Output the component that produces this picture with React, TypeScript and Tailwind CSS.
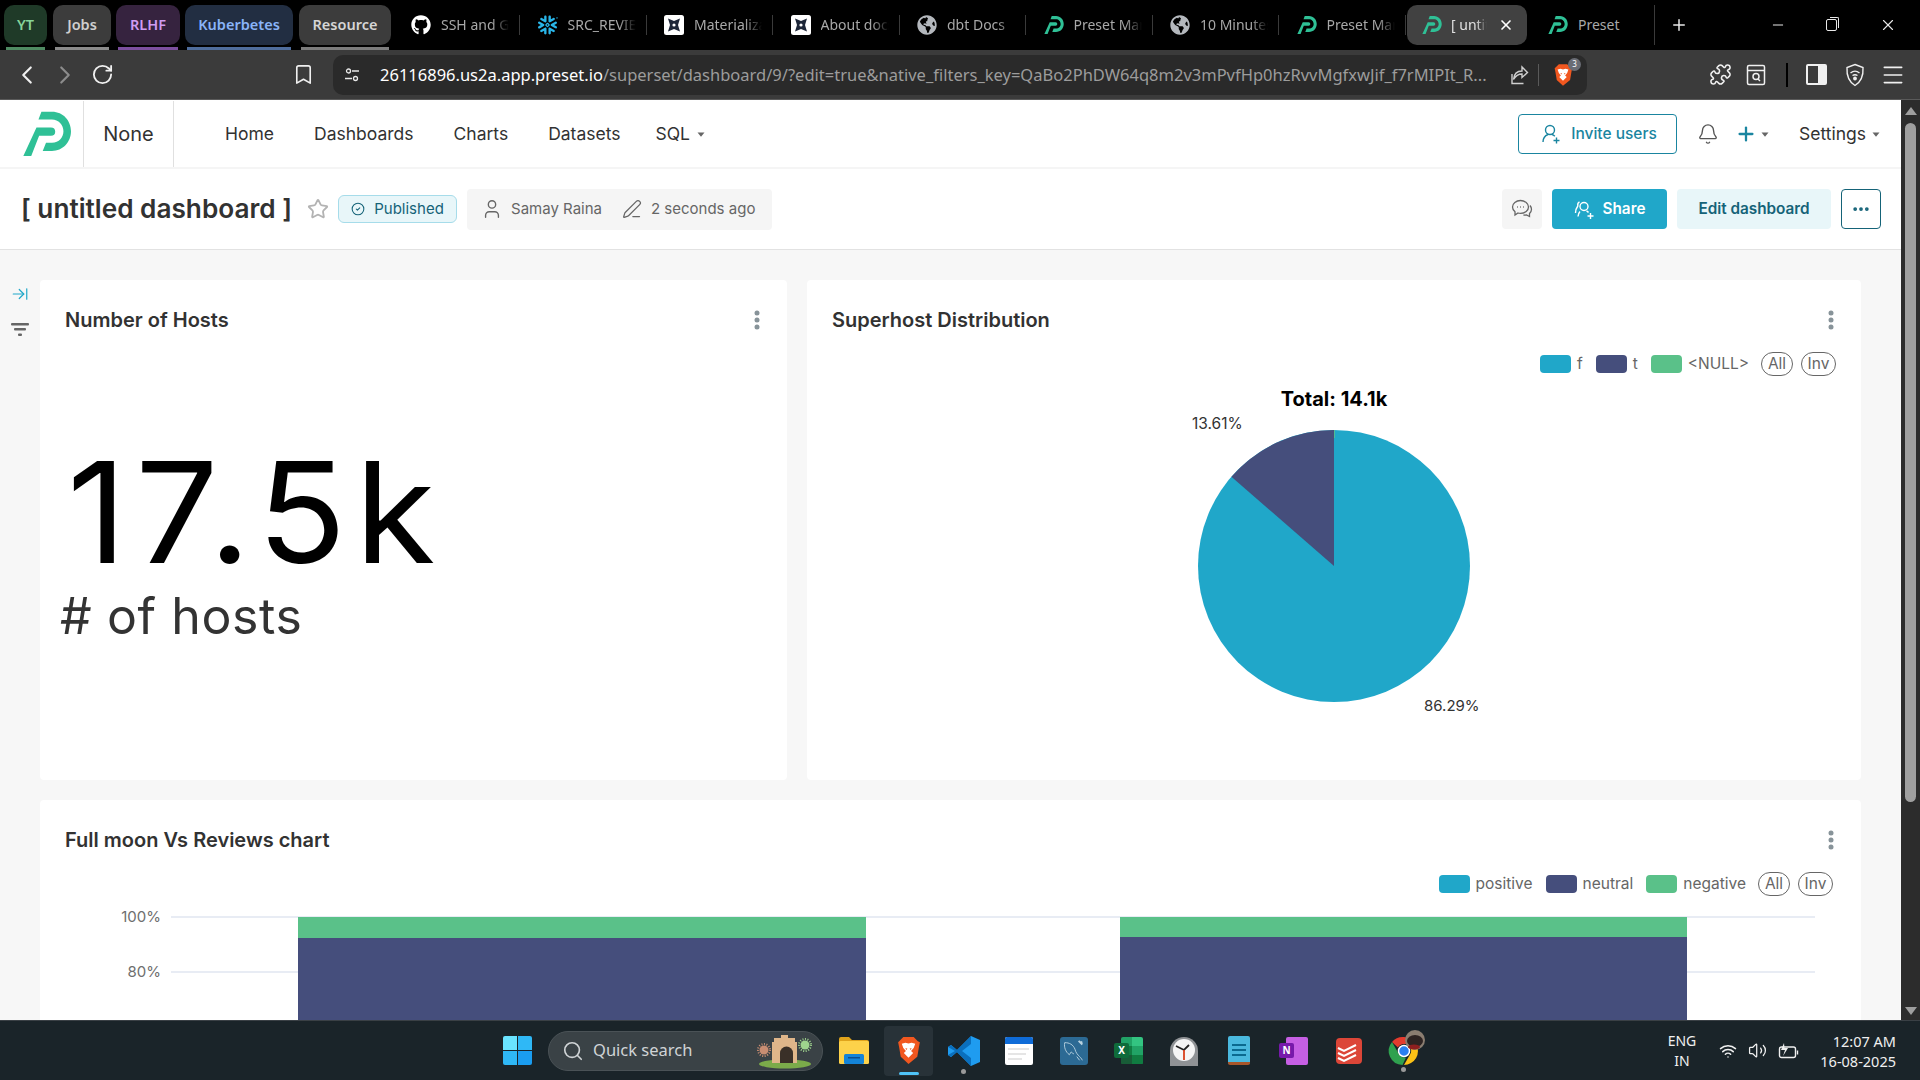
import {
  ArrowRightToLine,
  Bell,
  Bookmark,
  ChevronLeft,
  ChevronRight,
  CircleCheck,
  Ellipsis,
  Menu,
  Minus,
  PenLine,
  Plus,
  Puzzle,
  RotateCw,
  Search,
  Star,
  User,
  Volume2,
  Wifi,
  X,
} from "lucide-react";
import { FaGithub, FaGlobeAmericas } from "react-icons/fa";
import { SiSnowflake } from "react-icons/si";
import type { ReactNode } from "react";

const PresetLogo = ({ className }: { className: string }) => (
  <svg viewBox="35 15 150 140" className={className} fill="#2fc096">
    <path d="M78 65H122Q135 65 135 78Q135 90 122 90H86L62 152H38Z" />
    <path d="M93 17H125C160 17 183 45 183 77C183 110 158 137 125 137H97L107 112H125C147 112 160 95 160 77C160 57 145 41 125 41H84Z" />
  </svg>
);

const MaterializeIcon = () => (
  <svg viewBox="0 0 20 20" className="h-5 w-5">
    <rect width="20" height="20" rx="2.5" fill="#fff" />
    <path
      d="M4 3.5 10 6l6-2.5L14 10l2 6.500L10 14l-6 2.500L6 10Z"
      fill="#1d2638"
    />
    <circle cx="10" cy="10" r="1.600" fill="#fff" />
  </svg>
);

const Kebab = () => (
  <svg viewBox="0 0 6 20" className="h-5 w-1.5" fill="#879399">
    <circle cx="3" cy="3" r="2.500" />
    <circle cx="3" cy="10" r="2.500" />
    <circle cx="3" cy="17" r="2.500" />
  </svg>
);

const Caret = () => (
  <svg viewBox="0 0 8 5" className="h-[5px] w-2" fill="#666">
    <path d="M0.500 0.500h7L4 4.800z" />
  </svg>
);

const groups = [
  { label: "YT", w: "w-[43px]", ml: "ml-[4px]", box: "bg-[#1f3a28] text-[#86d49a]", line: "bg-[#4f8a62]" },
  { label: "Jobs", w: "w-[58px]", ml: "ml-[6px]", box: "bg-[#3c3c3c] text-[#cfcfcf]", line: "bg-[#8a8a8a]" },
  { label: "RLHF", w: "w-[64px]", ml: "ml-[5px]", box: "bg-[#36233f] text-[#d09cf2]", line: "bg-[#7c4f9e]" },
  { label: "Kuberbetes", w: "w-[108px]", ml: "ml-[5px]", box: "bg-[#222e42] text-[#8ab4f8]", line: "bg-[#4f6d9c]" },
  { label: "Resource", w: "w-[92px]", ml: "ml-[6px]", box: "bg-[#3c3c3c] text-[#d6d6d6]", line: "bg-[#7c7c7c]" },
];

const tabs: { label: string; icon: ReactNode }[] = [
  { label: "SSH and GPG keys", icon: <FaGithub className="h-5 w-5 text-white" /> },
  { label: "SRC_REVIEWS", icon: <SiSnowflake className="h-5 w-5 text-[#29b5e8]" /> },
  { label: "Materialization", icon: <MaterializeIcon /> },
  { label: "About docs", icon: <MaterializeIcon /> },
  { label: "dbt Docs", icon: <FaGlobeAmericas className="h-5 w-5 text-[#b4b8bd]" /> },
  { label: "Preset Manager", icon: <PresetLogo className="h-5 w-5" /> },
  { label: "10 Minutes to", icon: <FaGlobeAmericas className="h-5 w-5 text-[#b4b8bd]" /> },
  { label: "Preset Manager", icon: <PresetLogo className="h-5 w-5" /> },
];

const TabStrip = () => (
  <div className="flex h-[50px] bg-black pt-[5px] text-[14px] [font-family:'Noto_Sans',sans-serif]">
    {groups.map((g) => (
      <div key={g.label} className={`${g.ml} ${g.w} flex flex-col`}>
        <div
          className={`flex h-10 items-center justify-center rounded-[10px] text-[14.500px] font-semibold ${g.box}`}
        >
          {g.label}
        </div>
        <div className={`mx-[2px] mt-[2px] h-[3px] ${g.line}`} />
      </div>
    ))}
    <div className="ml-[3px] flex h-10">
      {tabs.map((t, i) => (
        <div key={i} className="flex w-[126.500px] items-center">
          <div className="ml-[17px] flex w-[109px] items-center gap-[10px] border-r border-[#3a3a3a]">
            {t.icon}
            <span className="-mt-[1px] w-[68px] overflow-hidden whitespace-nowrap text-[#a8a8a8] [mask-image:linear-gradient(to_right,black_75%,transparent)]">
              {t.label}
            </span>
          </div>
        </div>
      ))}
    </div>
    <div className="ml-[1px] flex h-10 w-[120px] items-center rounded-[10px] bg-[#414141] pl-[15px]">
      <PresetLogo className="h-5 w-5" />
      <span className="-mt-[1px] ml-[9px] w-[36px] overflow-hidden whitespace-nowrap text-[#e0e0e0] [mask-image:linear-gradient(to_right,black_70%,transparent)]">
        [ untitled
      </span>
      <X size={16} strokeWidth={2.500} className="ml-[11px] text-white" />
    </div>
    <div className="flex h-10 w-[128px] items-center border-r border-[#3a3a3a] pl-[21px]">
      <PresetLogo className="h-5 w-5" />
      <span className="-mt-[1px] ml-[10px] text-[#a8a8a8]">Preset</span>
    </div>
    <div className="ml-[15px] flex h-10 items-center">
      <Plus size={18} strokeWidth={2} className="text-[#e8e8e8]" />
    </div>
    <div className="ml-[82px] flex h-10 items-center">
      <Minus size={16} strokeWidth={1.500} className="text-[#e8e8e8]" />
    </div>
    <div className="ml-[40px] flex h-10 items-center">
      <div className="relative h-[12px] w-[11px] rounded-[2px] border border-[#e8e8e8]">
        <div className="absolute -top-[3px] -right-[3px] h-[11px] w-[9px] rounded-tr-[2px] border-t border-r border-[#e8e8e8]" />
      </div>
    </div>
    <div className="ml-[42px] flex h-10 items-center">
      <X size={18} strokeWidth={1.500} className="text-[#e8e8e8]" />
    </div>
  </div>
);

const BraveIcon = ({ size }: { size: string }) => (
  <svg viewBox="0 0 24 28" className={size}>
    <path
      d="M3 5 7 1h10l4 4 2 1-1 5-1.500 9L12 27 4.500 20 3 11 2 6Z"
      fill="#f1571f"
    />
    <path
      d="M5.500 7.500 9 6.500l3 .8 3-.8 3.500 1-1.500 4-2.500 3 2 2L12 21l-4.500-4.500 2-2-2.500-3Z"
      fill="#fff"
    />
    <path d="M9 11.500l2 .8-1.200 1.200zM15 11.500l-2 .8 1.200 1.200z" fill="#f1571f" />
  </svg>
);

const ToolBar = () => (
  <div className="flex h-[50px] items-center border-b border-[#5a5a5a] bg-[#3b3b3b] text-[#f0f0f0] [font-family:'Noto_Sans',sans-serif]">
    <ChevronLeft size={30} strokeWidth={1.700} className="ml-[12px]" />
    <ChevronRight size={30} strokeWidth={1.700} className="ml-[8px] text-[#8c8c8c]" />
    <RotateCw size={23} strokeWidth={1.900} className="ml-[11px]" />
    <Bookmark size={23} strokeWidth={1.700} className="ml-[178px]" />
    <div className="ml-[18px] flex h-10 w-[1254px] items-center rounded-[10px] bg-[#2a2a2a] pl-[11px]">
      <svg viewBox="0 0 16 16" className="h-4 w-4" fill="none" stroke="#e8e8e8" strokeWidth="1.300">
        <circle cx="4.500" cy="4" r="2" />
        <path d="M8 4h7M1 11.500h7" />
        <circle cx="11.500" cy="11.500" r="2" />
      </svg>
      <span className="ml-[20px] w-[1108px] overflow-hidden pt-[1px] whitespace-nowrap text-[16.500px] text-[#9c9c9c]">
        <span className="text-white">26116896.us2a.app.preset.io</span>
        /superset/dashboard/9/?edit=true&amp;native_filters_key=QaBo2PhDW64q8m2v3mPvfHp0hzRvvMgfxwJif_f7rMIPIt_R...
      </span>
      <svg viewBox="0 0 22 22" className="ml-[19px] h-[22px] w-[22px]" fill="none" stroke="#cfcfcf" strokeWidth="1.400">
        <path d="M5 10v9.500h11.500M6.500 15.500C7 10 10.500 7 15 7V3l5.500 5.500L15 13.500V10C11 10 8.500 12 6.500 15.500Z" />
      </svg>
      <div className="ml-[9px] h-[22px] w-px bg-[#5a5a5a]" />
      <div className="relative ml-[14px]">
        <BraveIcon size="h-[24px] w-[20px]" />
        <span className="absolute -top-[5px] -right-[8px] flex h-[13px] w-[13px] items-center justify-center rounded-full bg-[#6a6d75] text-[8px] text-white">
          3
        </span>
      </div>
    </div>
    <Puzzle size={23} strokeWidth={1.600} className="ml-[122px]" />
    <svg viewBox="0 0 20 22" className="ml-[14px] h-[22px] w-5" fill="none" stroke="#f0f0f0" strokeWidth="1.500">
      <rect x="1.500" y="1.500" width="17" height="19" rx="1.500" />
      <path d="M1.500 6.500h17" />
      <circle cx="10" cy="12.500" r="3" />
      <path d="m12 15 2 2" />
    </svg>
    <div className="ml-[20px] h-[24px] w-[2px] bg-black" />
    <div className="ml-[18px] flex h-[21px] w-[21px] justify-end rounded-[2px] border-2 border-[#f0f0f0]">
      <div className="w-[7px] bg-[#f0f0f0]" />
    </div>
    <svg viewBox="0 0 20 24" className="ml-[18px] h-6 w-5" fill="none" stroke="#f0f0f0" strokeWidth="1.400">
      <path d="M10 1.500 18 4.500c.5 8-1.500 14-8 18-6.500-4-8.500-10-8-18Z" />
      <path d="M5.500 10c3-2.500 6-2.500 9 0M7.500 12.500c1.500-1 3.500-1 5 0" />
      <circle cx="10" cy="15.500" r="1.200" fill="#f0f0f0" />
    </svg>
    <Menu size={26} strokeWidth={1.500} className="ml-[15px]" />
  </div>
);

const InviteIcon = () => (
  <svg viewBox="0 0 18 20" className="h-5 w-[18px]" fill="none" stroke="currentColor" strokeWidth="1.400">
    <circle cx="8" cy="6" r="4.500" />
    <path d="M1 18c0-4 2.500-6.500 5-7.500M10 10.500c1 .3 2 .9 2.800 1.700" />
    <path d="M11.500 16.500h6M14.500 13.500v6" />
  </svg>
);

const ShareIcon = () => (
  <svg viewBox="0 0 20 20" className="h-5 w-5" fill="none" stroke="currentColor" strokeWidth="1.400">
    <circle cx="10" cy="7.500" r="4" />
    <path d="M5.500 3C4 3.500 3.500 5 3.800 7c-1.500 2-2.300 4.500-2.300 7M6 12.500c-1 1-1.800 3-2 5M12.500 12c.8.300 1.500.8 2 1.500" />
    <path d="M13.500 17h6M16.500 14v6" />
  </svg>
);

const NavBar = () => (
  <div className="flex h-[67px] items-center bg-white pt-[1px] text-[17.500px] text-[#323232]">
    <div className="flex h-full w-[84px] items-center justify-center border-r border-[#e0e0e0] pl-[10px]">
      <PresetLogo className="h-[46px] w-[50px]" />
    </div>
    <div className="flex h-full w-[90px] items-center justify-center border-r border-[#e0e0e0] text-[20px]">
      None
    </div>
    <div className="ml-[51px] flex items-center gap-[40px]">
      <span>Home</span>
      <span>Dashboards</span>
      <span>Charts</span>
      <span>Datasets</span>
      <span className="-ml-[5px] flex items-center gap-[7px]">
        SQL <Caret />
      </span>
    </div>
    <div className="ml-auto flex items-center pr-[21px]">
      <button className="flex h-10 w-[159px] items-center justify-center gap-[11px] rounded-[4px] border border-[#1a85a0] pl-[4px] text-[15.500px] font-medium text-[#1a85a0]">
        <InviteIcon />
        Invite users
      </button>
      <Bell size={22} strokeWidth={1.500} className="ml-[20px] text-[#555]" />
      <Plus size={22} strokeWidth={2.500} className="ml-[16px] text-[#1a85a0]" />
      <span className="ml-[4px]">
        <Caret />
      </span>
      <span className="ml-[30px] flex items-center gap-[6px]">
        Settings <Caret />
      </span>
    </div>
  </div>
);

const DashHeader = () => (
  <div className="flex h-[83px] items-center border-t-2 border-b border-t-[#f5f5f5] border-b-[#e2e2e2] bg-white pl-[21px]">
    <span className="text-[26.200px] leading-none font-semibold whitespace-nowrap text-[#323232]">
      [ untitled dashboard ]
    </span>
    <Star size={22} strokeWidth={2} className="ml-[15px] text-[#b3b3b3]" />
    <span className="ml-[9px] flex h-[28px] w-[119px] items-center justify-center gap-[9px] rounded-[6px] border border-[#a6dcea] bg-[#e8f6f9] text-[15px] text-[#156378]">
      <CircleCheck size={14} strokeWidth={1.800} />
      Published
    </span>
    <div className="ml-[10px] flex h-[41px] w-[305px] items-center rounded-[4px] bg-[#f5f5f5] pl-[14px] text-[15px] text-[#666]">
      <User size={22} strokeWidth={1.500} />
      <span className="ml-[8px]">Samay Raina</span>
      <PenLine size={20} strokeWidth={1.500} className="ml-[20px]" />
      <span className="ml-[9px]">2 seconds ago</span>
    </div>
    <div className="ml-auto flex items-center gap-[10px] pr-[20px]">
      <div className="flex h-10 w-10 items-center justify-center rounded-[4px] bg-[#f5f5f5]">
        <svg viewBox="0 0 22 20" className="h-5 w-[22px]" fill="none" stroke="#666" strokeWidth="1.300">
          <path d="M9.500 1.500C5 1.500 1.500 4.500 1.500 8c0 2 1 3.500 2.500 4.700V16l3-2c1 .3 1.500.4 2.500.4 4.500 0 8-2.900 8-6.400s-3.500-6.500-8-6.500Z" />
          <path d="M19 6.500c1 1.200 1.500 2.500 1.500 3.800 0 1.800-.8 3-2 4.200v3l-3-1.500c-1 .2-2 .2-3 0" />
          <path d="M6 8h.8M9 8h.8M12 8h.8" />
        </svg>
      </div>
      <button className="flex h-10 w-[115px] items-center justify-center gap-[9px] rounded-[4px] bg-[#20a7c9] text-[15.300px] font-semibold text-white">
        <ShareIcon />
        Share
      </button>
      <button className="flex h-10 w-[154px] items-center justify-center rounded-[4px] bg-[#e8f6f9] text-[15.300px] font-semibold text-[#156378]">
        Edit dashboard
      </button>
      <button className="flex h-10 w-10 items-center justify-center rounded-[4px] border border-[#156378] text-[#156378]">
        <Ellipsis size={20} strokeWidth={2.500} />
      </button>
    </div>
  </div>
);

const Swatch = ({ color }: { color: string }) => (
  <span className={`inline-block h-[18px] w-[31px] rounded-[4px] ${color}`} />
);

const Legend = ({ items }: { items: { color: string; label: string }[] }) => (
  <div className="flex h-6 items-center justify-end text-[15.500px] text-[#666]">
    {items.map((item) => (
      <span key={item.label} className="mr-[13px] flex items-center gap-[6px]">
        <Swatch color={item.color} />
        {item.label}
      </span>
    ))}
    <span className="-ml-[1px] flex h-6 w-[32px] items-center justify-center rounded-full border border-[#666]">
      All
    </span>
    <span className="ml-[8px] flex h-6 w-[35px] items-center justify-center rounded-full border border-[#666]">
      Inv
    </span>
  </div>
);

const CardTitle = ({ title }: { title: string }) => (
  <div className="flex h-7 items-center justify-between text-[20px] font-semibold text-[#323232]">
    {title}
    <Kebab />
  </div>
);

const NumberCard = () => (
  <div className="h-[500px] w-[747px] shrink-0 rounded-[4px] bg-white pt-[26px] pr-[27px] pl-[25px] text-black">
    <CardTitle title="Number of Hosts" />
    <div className="mt-[113px] ml-[2px] origin-left scale-x-[1.05] text-[140px] leading-[130px] font-normal tracking-[8px]">
      17.5k
    </div>
    <div className="mt-[9px] -ml-[5px] text-[50px] leading-[60px] font-normal tracking-[0.600px] text-[#333]">
      # of hosts
    </div>
  </div>
);

const PieCard = () => (
  <div className="h-[500px] flex-1 rounded-[4px] bg-white pt-[26px]">
    <div className="pr-[27px] pl-[25px]">
      <CardTitle title="Superhost Distribution" />
    </div>
    <div className="mt-[18px] pr-[25px]">
      <Legend
        items={[
          { color: "bg-[#20a7c9]", label: "f" },
          { color: "bg-[#454e7c]", label: "t" },
          { color: "bg-[#5ac189]", label: "<NULL>" },
        ]}
      />
    </div>
    <svg viewBox="0 0 1054 400" className="mt-[4px] block h-[400px] w-full">
      <text x="527" y="26" textAnchor="middle" fontSize="20" fontWeight="700" fill="#000">
        Total: 14.1k
      </text>
      <circle cx="527" cy="186" r="136" fill="#20a7c9" />
      <path d="M527 186 424.400 96.800A136 136 0 0 1 527 50Z" fill="#454e7c" />
      <line x1="527.500" x2="527.500" y1="50" y2="58" stroke="#5ac189" strokeWidth="0.800" />
      <text x="385" y="49" fontSize="15.500" fill="#333">
        13.61%
      </text>
      <text x="617" y="331" fontSize="15" fill="#333">
        86.29%
      </text>
    </svg>
  </div>
);

const BarCard = () => (
  <div className="mt-5 h-[500px] rounded-[4px] bg-white pt-[26px]">
    <div className="pr-[27px] pl-[25px]">
      <CardTitle title="Full moon Vs Reviews chart" />
    </div>
    <div className="mt-[18px] pr-[28px]">
      <Legend
        items={[
          { color: "bg-[#20a7c9]", label: "positive" },
          { color: "bg-[#454e7c]", label: "neutral" },
          { color: "bg-[#5ac189]", label: "negative" },
        ]}
      />
    </div>
    <svg viewBox="0 0 1821 300" className="mt-[9px] block h-[300px] w-full">
      {[12, 67, 122].map((y) => (
        <line key={y} x1="131" x2="1775" y1={y} y2={y} stroke="#e0e6f1" strokeWidth="1.500" />
      ))}
      {[
        { y: 17, t: "100%" },
        { y: 72, t: "80%" },
        { y: 127, t: "60%" },
      ].map((l) => (
        <text key={l.t} x="121" y={l.y} textAnchor="end" fontSize="15" fill="#6e6e6e">
          {l.t}
        </text>
      ))}
      <rect x="258" y="12" width="568" height="21" fill="#5ac189" />
      <rect x="258" y="33" width="568" height="267" fill="#454e7c" />
      <rect x="1080" y="12" width="567" height="20" fill="#5ac189" />
      <rect x="1080" y="32" width="567" height="268" fill="#454e7c" />
    </svg>
  </div>
);

const Dashboard = () => (
  <div className="flex-1 overflow-hidden bg-[#f7f7f7] [font-family:Inter,sans-serif] [font-optical-sizing:none]">
    <NavBar />
    <DashHeader />
    <div className="flex pt-[30px] pr-[40px]">
      <div className="flex w-[40px] shrink-0 flex-col items-center pt-[5px]">
        <ArrowRightToLine size={18} strokeWidth={1.600} className="text-[#20a7c9]" />
        <svg viewBox="0 0 18 14" className="mt-[20px] h-[14px] w-[18px]" fill="#666">
          <rect width="18" height="2.500" rx="1" />
          <rect x="3" y="5" width="12" height="2.500" rx="1" />
          <rect x="7" y="10.500" width="4" height="2.500" rx="1" />
        </svg>
      </div>
      <div className="flex-1">
        <div className="flex gap-5">
          <NumberCard />
          <PieCard />
        </div>
        <BarCard />
      </div>
    </div>
  </div>
);

const ScrollBar = () => (
  <div className="flex w-[19px] flex-col items-center bg-[#2c2c2c] pt-[7px] pb-[5px]">
    <div className="h-0 w-0 border-x-[6px] border-b-[8px] border-x-transparent border-b-[#9f9f9f]" />
    <div className="mt-[8px] h-[679px] w-[11px] rounded-full bg-[#9f9f9f]" />
    <div className="mt-auto h-0 w-0 border-x-[6px] border-t-[8px] border-x-transparent border-t-[#9f9f9f]" />
  </div>
);

const WindowsLogo = () => (
  <div className="grid h-[29px] w-[29px] grid-cols-2 gap-[1.500px]">
    <div className="rounded-tl-[2px] bg-[#6ae4ff]" />
    <div className="rounded-tr-[2px] bg-[#2fb8f6]" />
    <div className="rounded-bl-[2px] bg-[#2fb8f6]" />
    <div className="rounded-br-[2px] bg-[#1a9df0]" />
  </div>
);

const IndiaGate = () => (
  <svg viewBox="0 0 56 36" className="h-[36px] w-[56px]">
    <ellipse cx="28" cy="31" rx="26" ry="4.500" fill="#7bab4a" />
    <path d="M15 9h2V5h7V2h7v3h7v4h2v21H15Z" fill="#dfb68a" />
    <path d="M23 30V20a6.500 6.500 0 0 1 13 0v10Z" fill="#3a3028" />
    <circle cx="7" cy="17" r="4.500" fill="#c98d72" />
    <circle cx="7" cy="17" r="6" fill="none" stroke="#c98d72" strokeWidth="2" strokeDasharray="1 1.500" />
    <circle cx="48" cy="12" r="4.500" fill="#9ed48d" />
    <circle cx="48" cy="12" r="6" fill="none" stroke="#9ed48d" strokeWidth="2" strokeDasharray="1 1.500" />
  </svg>
);

const FolderIcon = () => (
  <svg viewBox="0 0 30 27" className="h-[27px] w-[30px]">
    <path d="M0 2a2 2 0 0 1 2-2h8l3 3h15a2 2 0 0 1 2 2v3H0Z" fill="#e0a41c" />
    <rect y="4" width="30" height="23" rx="1.500" fill="#fdd24a" />
    <rect x="5" y="17" width="20" height="10" rx="1.500" fill="#1484d8" />
    <rect x="9" y="20" width="12" height="1.500" fill="#0b4f8f" />
  </svg>
);

const VsCodeIcon = () => (
  <svg viewBox="0 0 32 32" className="h-8 w-8">
    <path d="M23 1 32 5v22l-9 4L9 17l-6 5-3-2v-8l3-2 6 5Z" fill="#1f9cf0" />
    <path d="M23 1 9 15l-6-5-3 2 7 4-7 4 3 2 6-5 14 14 0-8-9-7 9-7Z" fill="#0a6fbd" />
  </svg>
);

const NotesIcon = () => (
  <div className="h-[28px] w-[28px] overflow-hidden rounded-[2px] bg-white">
    <div className="h-[7px] bg-[#0f6cd8]" />
    <div className="mt-[4px] ml-[3px] h-[2px] w-[21px] bg-[#e5e5e5]" />
    <div className="mt-[3px] ml-[3px] h-[2px] w-[18px] bg-[#e5e5e5]" />
    <div className="mt-[3px] ml-[3px] h-[2px] w-[14px] bg-[#e5e5e5]" />
  </div>
);

const MysqlIcon = () => (
  <div className="flex h-[28px] w-[28px] items-center justify-center rounded-[3px] bg-[#2c6a94]">
    <svg viewBox="0 0 28 28" className="h-[26px] w-[26px]" fill="none" stroke="#b8d2e0" strokeWidth="1">
      <path d="M4 5c5 0 9 2 11 7 1 4 3 6 5 8 1 1 2 2 3 4" />
      <path d="M4 5c-1 5 1 10 5 13l2-3c1 1 2 2 3 2" />
      <path d="M19 3l4 4M21 5l2-1" strokeWidth="2" />
      <path d="M17 20l3 4" />
    </svg>
  </div>
);

const ExcelIcon = () => (
  <div className="relative h-[28px] w-[29px]">
    <div className="ml-[7px] grid h-full grid-cols-2 grid-rows-3 overflow-hidden rounded-[2px]">
      <div className="bg-[#21a366]" />
      <div className="bg-[#33c481]" />
      <div className="bg-[#107c41]" />
      <div className="bg-[#21a366]" />
      <div className="bg-[#185c37]" />
      <div className="bg-[#107c41]" />
    </div>
    <div className="absolute top-[6px] left-0 flex h-[15px] w-[15px] items-center justify-center rounded-[2px] bg-[#0f6b3a] text-[10px] font-bold text-white">
      X
    </div>
  </div>
);

const ClockIcon = () => (
  <svg viewBox="0 0 30 30" className="h-[30px] w-[30px]">
    <path d="M15 1a14 14 0 0 1 14 14v15H1V15A14 14 0 0 1 15 1Z" fill="#8f9295" />
    <circle cx="15" cy="14" r="11" fill="#f5f5f5" />
    <path d="M7 10l8 4 5-5" stroke="#222" strokeWidth="1.800" fill="none" />
    <path d="M15 14v10" stroke="#d9401c" strokeWidth="1.800" />
  </svg>
);

const NotepadIcon = () => (
  <div className="h-[29px] w-[22px] overflow-hidden rounded-[2px] border-b-[3px] border-[#a8562a] bg-[#4ab9de] pt-[8px]">
    <div className="mx-auto h-[2px] w-[14px] bg-[#0b6a8f]" />
    <div className="mx-auto mt-[3px] h-[2px] w-[14px] bg-[#0b6a8f]" />
    <div className="mx-auto mt-[3px] h-[2px] w-[14px] bg-[#0b6a8f]" />
  </div>
);

const OneNoteIcon = () => (
  <div className="relative h-[28px] w-[29px]">
    <div className="ml-[7px] h-full rounded-[2px] bg-[#c65fe4]" />
    <div className="absolute top-[6px] left-0 flex h-[15px] w-[15px] items-center justify-center rounded-[2px] bg-[#7719aa] text-[10px] font-bold text-white">
      N
    </div>
  </div>
);

const TodoistIcon = () => (
  <svg viewBox="0 0 26 26" className="h-[26px] w-[26px]">
    <rect width="26" height="26" rx="4" fill="#dc4638" />
    <path d="M2 10l6 3 12-6M2 15l6 3 12-6M2 20l6 3 12-6" stroke="#fff" strokeWidth="2" fill="none" />
  </svg>
);

const ChromeIcon = () => (
  <svg viewBox="0 0 30 30" className="h-[30px] w-[30px] overflow-visible">
    <path d="M15 1a14 14 0 0 1 12.100 7H15a7 7 0 0 0-6.100 3.500L3 6A14 14 0 0 1 15 1Z" fill="#e33b2e" />
    <path d="M27.100 8A14 14 0 0 1 15 29l6-10.500A7 7 0 0 0 21 11Z" fill="#fbc116" />
    <path d="M3 6l6 10.500a7 7 0 0 0 8 5L13.500 29A14 14 0 0 1 3 6Z" fill="#2fa14f" />
    <circle cx="15" cy="15" r="5.500" fill="#2a7ff0" stroke="#fff" strokeWidth="1.500" />
    <circle cx="26" cy="4" r="10" fill="#8a7d70" />
    <ellipse cx="26" cy="5" rx="8" ry="6" fill="#2e2422" />
    <ellipse cx="25" cy="11" rx="6" ry="2.500" fill="#8e1f1f" />
  </svg>
);

const TaskBar = () => (
  <div className="flex h-[60px] items-center border-t border-[#3a4045] bg-[#1a2429] pl-[503px] text-[#f0f0f0] [font-family:'Noto_Sans',sans-serif]">
    <WindowsLogo />
    <div className="ml-[16px] flex h-10 w-[275px] items-center rounded-full border border-[#4a5256] bg-[#3a4246] pl-[13px] text-[16.500px] text-[#d0d4d6]">
      <Search size={22} strokeWidth={1.800} />
      <span className="ml-[9px]">Quick search</span>
      <span className="mr-[9px] ml-auto">
        <IndiaGate />
      </span>
    </div>
    <div className="ml-[16px]">
      <FolderIcon />
    </div>
    <div className="relative ml-[15px] flex h-[50px] w-[49px] items-center justify-center rounded-[4px] bg-[#283238]">
      <BraveIcon size="h-[29px] w-[25px]" />
      <div className="absolute bottom-[1px] h-[3px] w-[20px] rounded-full bg-[#4fc3f7]" />
    </div>
    <div className="relative ml-[15px]">
      <VsCodeIcon />
      <div className="absolute -bottom-[7px] left-[13px] h-[5px] w-[5px] rounded-full bg-[#9a9a9a]" />
    </div>
    <div className="ml-[25px]">
      <NotesIcon />
    </div>
    <div className="ml-[27px]">
      <MysqlIcon />
    </div>
    <div className="ml-[26px]">
      <ExcelIcon />
    </div>
    <div className="ml-[26px]">
      <ClockIcon />
    </div>
    <div className="ml-[29px]">
      <NotepadIcon />
    </div>
    <div className="ml-[29px]">
      <OneNoteIcon />
    </div>
    <div className="ml-[28px]">
      <TodoistIcon />
    </div>
    <div className="relative ml-[27px]">
      <ChromeIcon />
      <div className="absolute -bottom-[6px] left-[12px] h-[5px] w-[5px] rounded-full bg-[#9a9a9a]" />
    </div>
    <div className="ml-[243px] flex w-[40px] flex-col items-center text-[14px] leading-5">
      <span>ENG</span>
      <span>IN</span>
    </div>
    <Wifi size={18} strokeWidth={2} className="ml-[17px]" />
    <Volume2 size={19} strokeWidth={1.600} className="ml-[11px]" />
    <svg viewBox="0 0 22 16" className="ml-[11px] h-4 w-[22px]" fill="none" stroke="#f0f0f0" strokeWidth="1.400">
      <rect x="1.500" y="4" width="16" height="10.500" rx="2" />
      <path d="M19.500 7.500v4" />
      <path d="M6 0 3 7h4l-2 6 5-8H6.500Z" fill="#f0f0f0" stroke="none" />
    </svg>
    <div className="ml-auto flex flex-col items-end pr-[24px] text-[14.500px] leading-5">
      <span>12:07 AM</span>
      <span>16-08-2025</span>
    </div>
  </div>
);

const App = () => (
  <div className="flex h-[1080px] w-[1920px] flex-col overflow-hidden">
    <TabStrip />
    <ToolBar />
    <div className="flex h-[920px]">
      <Dashboard />
      <ScrollBar />
    </div>
    <TaskBar />
  </div>
);

export default App;
